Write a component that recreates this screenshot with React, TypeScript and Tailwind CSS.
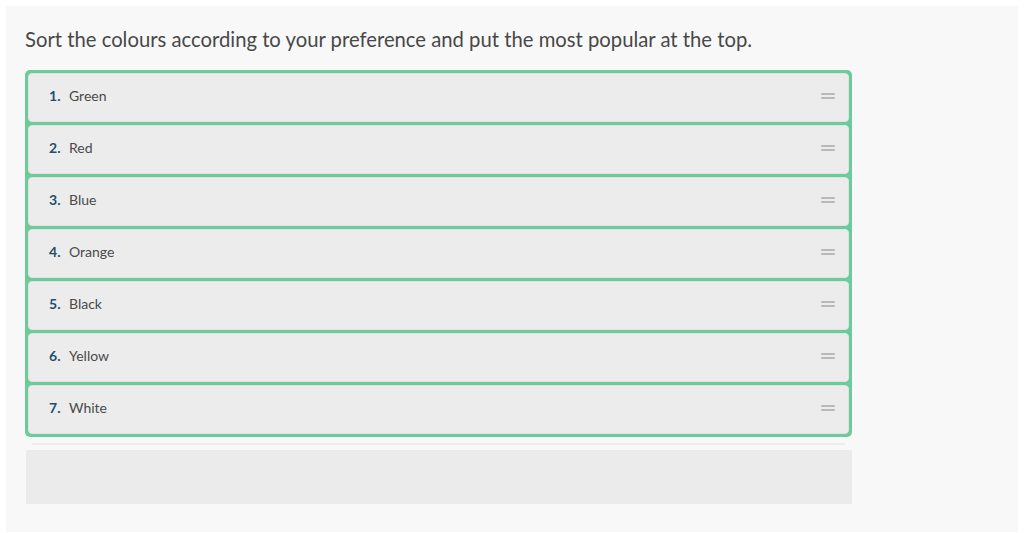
const colours = ['Green', 'Red', 'Blue', 'Orange', 'Black', 'Yellow', 'White'];

function DragHandle() {
  return (
    <svg width="14" height="6" viewBox="0 0 14 6" className="shrink-0">
      <rect x="0" y="0" width="14" height="2" rx="1" fill="#b9b9b9" />
      <rect x="0" y="4" width="14" height="2" rx="1" fill="#b9b9b9" />
    </svg>
  );
}

function SortItem({ index, label }: { index: number; label: string }) {
  return (
    <div className="h-[49px] bg-[#ececec] rounded-[4px] border border-[#e2e2e2] flex items-center pl-[20px] pr-[13px] pb-[4px]">
      <span className="font-bold text-[#1f4e6e] text-[14px] w-[20px]">{index}.</span>
      <span className="text-[#4a4a4a] text-[14px]">{label}</span>
      <div className="ml-auto pt-[1px]">
        <DragHandle />
      </div>
    </div>
  );
}

export default function App() {
  return (
    <div className="h-[533px] bg-white p-[6px] pb-px" style={{ fontFamily: 'Lato, "Open Sans", sans-serif' }}>
      <div className="h-full bg-[#f8f8f8] pl-[19px] pt-[20px]">
        <h2 className="text-[20.25px] text-[#484848] leading-[26px] mb-[18px]">
          Sort the colours according to your preference and put the most popular at the top.
        </h2>
        <div className="w-[827px]">
          <div className="bg-[#6ccb9b] rounded-[5px] p-[3px] flex flex-col gap-[3px]">
            {colours.map((c, i) => (
              <SortItem key={c} index={i + 1} label={c} />
            ))}
          </div>
          <div className="mx-[7px] mt-[6px] h-[2px] bg-[#ececec]" />
          <div className="mt-[5px] ml-px h-[54px] bg-[#ebebeb]" />
        </div>
      </div>
    </div>
  );
}
